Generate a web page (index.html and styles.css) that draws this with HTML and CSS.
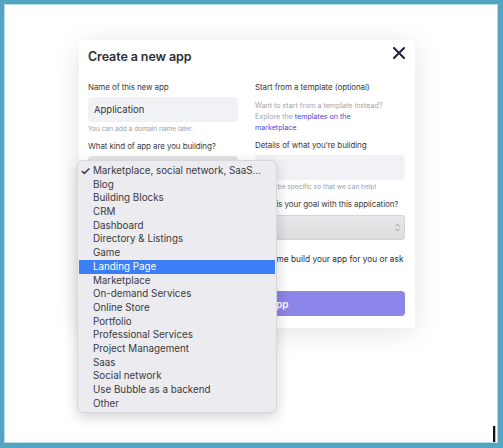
FILE: index.html
```html
<!DOCTYPE html>
<html>
<head>
<meta charset="utf-8">
<meta name="viewport" content="width=device-width, initial-scale=1">
<link rel="stylesheet" href="styles.css">
</head>
<body>

<div class="frame">
    <div class="modal">
        <div class="modal-head">
            <h2>Create a new app</h2>
            <svg class="close" width="12" height="12" viewBox="0 0 12 12">
                <path d="M1 1 L11 11 M11 1 L1 11" stroke="#1d1f44" stroke-width="2" stroke-linecap="round"/>
            </svg>
        </div>

        <div class="cols">
            <div class="col">
                <label>Name of this new app</label>
                <div class="field">Application</div>
                <p class="hint">You can add a domain name later.</p>
                <label class="next">What kind of app are you building?</label>
                <div class="select"></div>
            </div>

            <div class="col">
                <label>Start from a template (optional)</label>
                <p class="info">Want to start from a template instead?<br>
                    Explore the <a href="#">templates on the<br>marketplace</a>.</p>
                <label class="next">Details of what you're building</label>
                <div class="field"></div>
                <p class="hint">Please be specific so that we can help!</p>
                <label class="next">What is your goal with this application?</label>
                <div class="select grey">
                    <svg class="arrows" width="5" height="9" viewBox="0 0 5 9">
                        <path d="M0.5 3.5 L2.5 1 L4.5 3.5 M0.5 5.5 L2.5 8 L4.5 5.5" fill="none" stroke="#9a9a9a" stroke-width="0.9"/>
                    </svg>
                </div>
            </div>
        </div>

        <p class="ask">Would you like a certified Bubble agency to come build your app for you or ask<br>questions?</p>
        <button class="create">Create a new app</button>

        <!-- native select menu, opened -->
        <ul class="menu">
            <li class="checked">Marketplace, social network, SaaS...</li>
            <li>Blog</li>
            <li>Building Blocks</li>
            <li>CRM</li>
            <li>Dashboard</li>
            <li>Directory &amp; Listings</li>
            <li>Game</li>
            <li class="active">Landing Page</li>
            <li>Marketplace</li>
            <li>On-demand Services</li>
            <li>Online Store</li>
            <li>Portfolio</li>
            <li>Professional Services</li>
            <li>Project Management</li>
            <li>Saas</li>
            <li>Social network</li>
            <li>Use Bubble as a backend</li>
            <li>Other</li>
        </ul>
    </div>

    <span class="cursor"></span>
</div>

</body>
</html>
```

FILE: styles.css
```css
body {
  margin: 0;
  font-family: Inter, "Liberation Sans", sans-serif;
}

/* Teal window frame */
.frame {
  position: relative;
  width: 503px;
  height: 448px;
  box-sizing: border-box;
  border: 4px solid #53a5c2;
  border-right-width: 5px;
  border-bottom-width: 5px;
  background: #fff;
  box-shadow: inset 0 0 0 1px #b9dde8;
  padding: 36px 0 0 75px;
}

/* The dialog */
.modal {
  position: relative;
  width: 336px;
  height: 288px;
  box-sizing: border-box;
  padding: 9px 10px 11px 9px;
  background: #fff;
  border-radius: 3px;
  box-shadow: 0 4px 28px rgba(0, 0, 0, 0.11);
  color: #2e2e33;
}

.modal-head {
  display: flex;
  justify-content: space-between;
  align-items: flex-start;
}

.modal-head h2 {
  margin: 0;
  font-size: 12.5px;
  line-height: 16px;
  font-weight: 600;
  letter-spacing: -0.1px;
}

.close {
  margin: -2px 0 0 0;
}

.cols {
  display: grid;
  grid-template-columns: 150px 150px;
  column-gap: 17px;
  margin-top: 16px;
}

label {
  display: block;
  font-size: 8px;
  line-height: 12px;
  letter-spacing: -0.1px;
  color: #3a3a40;
  margin-bottom: 4px;
  white-space: nowrap;
}

label.next {
  margin-top: 6px;
}

.field {
  height: 25px;
  border-radius: 4px;
  background: #f1f2f6;
  font-size: 9.5px;
  line-height: 25px;
  padding-left: 6px;
  color: #333;
}

.hint {
  margin: 2px 0 0;
  font-size: 6.6px;
  line-height: 10px;
  color: #9c9ca4;
}

.info {
  margin: 7px 0 0;
  font-size: 7.1px;
  line-height: 11px;
  color: #a3a3ab;
  height: 33px;
  white-space: nowrap;
}

.info a {
  color: #4b3fd8;
  text-decoration: none;
}

.select {
  height: 25px;
  border-radius: 4px;
  background: linear-gradient(#e6e6e8, #d9d9dc);
}

.select.grey {
  position: relative;
  margin-top: 5px;
  background: linear-gradient(#e9e9eb, #dcdcde);
  box-shadow: inset 0 0 0 1px #d4d4d6;
}

.arrows {
  position: absolute;
  right: 5px;
  top: 8px;
}

.ask {
  margin: 13px 0 0;
  font-size: 8.3px;
  line-height: 13px;
  text-indent: 7px;
  color: #2e2e33;
  white-space: nowrap;
}

.create {
  display: block;
  width: 100%;
  height: 25px;
  margin-top: 12px;
  border: none;
  border-radius: 4px;
  background: #8b86e8;
  color: #fff;
  font-family: inherit;
  font-size: 10px;
  font-weight: 600;
}

/* Open dropdown list */
.menu {
  position: absolute;
  left: -2px;
  top: 120px;
  width: 200px;
  height: 253px;
  box-sizing: border-box;
  margin: 0;
  padding: 3px 1px;
  list-style: none;
  background: #ebebf0;
  border: 1px solid #d6d6dc;
  border-radius: 6px;
  box-shadow: 0 4px 14px rgba(0, 0, 0, 0.18);
  font-size: 9.8px;
  color: #3a3a3e;
}

.menu li {
  height: 13.7px;
  line-height: 13.7px;
  padding-left: 14px;
  position: relative;
  white-space: nowrap;
}

.menu li.checked::before {
  content: "✓";
  position: absolute;
  left: 1px;
  font-size: 12px;
  font-weight: 600;
}

.menu li.active {
  background: #3b7ef6;
  color: #fff;
}

/* Text cursor in the corner */
.cursor {
  position: absolute;
  right: 3px;
  bottom: 1px;
  width: 2px;
  height: 16px;
  background: #111;
  box-shadow: 1px 0 0 #bbb;
}
```
